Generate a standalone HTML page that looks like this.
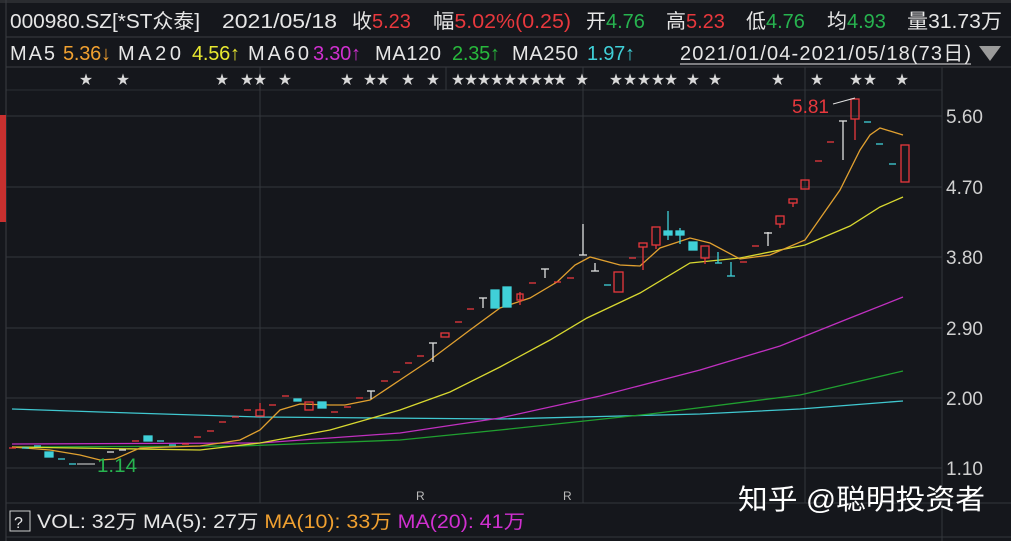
<!DOCTYPE html>
<html><head><meta charset="utf-8"><style>
body{margin:0;width:1011px;height:541px;background:#15171c;overflow:hidden;font-family:"Liberation Sans","Noto Sans CJK SC",sans-serif;}
svg{position:absolute;left:0;top:0}
</style></head><body>
<svg width="1011" height="541" xmlns="http://www.w3.org/2000/svg" font-family="Liberation Sans, Noto Sans CJK SC, sans-serif">
<rect width="1011" height="541" fill="#15171c"/>
<rect x="0" y="0" width="1011" height="3" fill="#2a2c30"/>
<line x1="6" y1="37" x2="1011" y2="37" stroke="#3a3d42"/>
<line x1="6" y1="67" x2="1011" y2="67" stroke="#3a3d42"/>
<line x1="6" y1="90" x2="942" y2="90" stroke="#2c2f34"/>
<line x1="6" y1="0" x2="6" y2="541" stroke="#3a3d42"/>
<rect x="0" y="115" width="6" height="107" fill="#c8302f"/>
<g stroke="#34373c" stroke-width="1">
<line x1="6" y1="116" x2="942" y2="116"/><line x1="6" y1="187" x2="942" y2="187"/>
<line x1="6" y1="257" x2="942" y2="257"/><line x1="6" y1="328" x2="942" y2="328"/>
<line x1="6" y1="398" x2="942" y2="398"/><line x1="6" y1="468" x2="942" y2="468"/>
<line x1="260" y1="67" x2="260" y2="503"/><line x1="446" y1="67" x2="446" y2="90"/>
<line x1="583" y1="67" x2="583" y2="503"/><line x1="805" y1="67" x2="805" y2="503"/>
<line x1="942" y1="67" x2="942" y2="541"/>
<line x1="6" y1="503" x2="1011" y2="503"/>
<line x1="6" y1="537" x2="1011" y2="537"/>
</g>
<g font-size="20" fill="#e6e6e6">
<text x="10" y="28" textLength="190" lengthAdjust="spacingAndGlyphs">000980.SZ[*ST众泰]</text>
<text x="222" y="28" textLength="115" lengthAdjust="spacingAndGlyphs">2021/05/18</text>
<text x="352" y="28">收<tspan fill="#e8383d">5.23</tspan></text>
<text x="433" y="28" textLength="138" lengthAdjust="spacingAndGlyphs">幅<tspan fill="#e8383d">5.02%(0.25)</tspan></text>
<text x="586" y="28">开<tspan fill="#27b34f">4.76</tspan></text>
<text x="666" y="28">高<tspan fill="#e8383d">5.23</tspan></text>
<text x="746" y="28">低<tspan fill="#27b34f">4.76</tspan></text>
<text x="827" y="28">均<tspan fill="#27b34f">4.93</tspan></text>
<text x="907" y="28" textLength="95" lengthAdjust="spacingAndGlyphs">量31.73万</text>
</g>
<g font-size="20" fill="#e6e6e6" lengthAdjust="spacingAndGlyphs">
<text x="10" y="60" textLength="45">MA5</text><text x="63" y="60" fill="#f0a030" textLength="48">5.36↓</text>
<text x="118" y="60" textLength="63">MA20</text><text x="192" y="60" fill="#e8e830" textLength="48">4.56↑</text>
<text x="248" y="60" textLength="61">MA60</text><text x="313" y="60" fill="#d030d0" textLength="48">3.30↑</text>
<text x="375" y="60" textLength="66">MA120</text><text x="452" y="60" fill="#28b83c" textLength="48">2.35↑</text>
<text x="512" y="60" textLength="66">MA250</text><text x="587" y="60" fill="#40d0d8" textLength="48">1.97↑</text>
<text x="680" y="60" textLength="291">2021/01/04-2021/05/18(73日)</text>
</g>
<line x1="680" y1="64" x2="971" y2="64" stroke="#e6e6e6"/>
<polygon points="979,46 1001,46 990,61" fill="#9a9a9a"/>
<g font-size="13" fill="#d8d8d8" text-anchor="middle">
<text x="86" y="84">★</text><text x="123" y="84">★</text><text x="222" y="84">★</text><text x="247" y="84">★</text><text x="260" y="84">★</text><text x="285" y="84">★</text>
<text x="347" y="84">★</text><text x="370" y="84">★</text><text x="383" y="84">★</text><text x="408" y="84">★</text><text x="433" y="84">★</text>
<text x="458" y="84">★</text><text x="471" y="84">★</text><text x="484" y="84">★</text><text x="497" y="84">★</text><text x="510" y="84">★</text><text x="523" y="84">★</text><text x="536" y="84">★</text><text x="549" y="84">★</text><text x="560" y="84">★</text>
<text x="582" y="84">★</text>
<text x="616" y="84">★</text><text x="630" y="84">★</text><text x="644" y="84">★</text><text x="658" y="84">★</text><text x="671" y="84">★</text>
<text x="693" y="84">★</text><text x="715" y="84">★</text><text x="778" y="84">★</text><text x="817" y="84">★</text><text x="856" y="84">★</text><text x="870" y="84">★</text><text x="902" y="84">★</text>
</g>
<g font-size="19" fill="#d0d0d0">
<text x="946" y="123">5.60</text><text x="946" y="194">4.70</text><text x="946" y="264">3.80</text>
<text x="946" y="335">2.90</text><text x="946" y="405">2.00</text><text x="946" y="475">1.10</text>
</g>
<g fill="none" stroke-width="1.3">
<polyline stroke="#40c8d0" points="12,409 100,412 260,417 500,419 700,414 800,409 903,401"/>
<polyline stroke="#20a030" points="12,447 240,446 400,440 500,430 650,414 800,395 903,371"/>
<polyline stroke="#c030c0" points="12,444 260,443 400,433 500,418 600,396 700,370 780,346 850,318 903,297"/>
<polyline stroke="#d8d830" points="12,447 200,450 260,443 330,430 400,410 450,392 500,367 550,340 587,318 640,293 690,263 740,258 805,245 850,226 880,207 903,197"/>
<polyline stroke="#e0a030" points="12,447 50,450 80,455 100,460 115,459 140,448 200,446 240,440 260,430 280,410 300,404 330,405 345,405 370,400 400,380 430,360 470,330 500,308 530,298 557,282 575,265 590,257 620,265 640,266 660,248 690,238 710,243 740,259 770,255 805,240 840,190 860,150 870,135 880,128 903,135"/>
</g>
<g stroke-width="1.3" fill="none">
<g stroke="#e8383d">
<line x1="9" y1="448" x2="16" y2="448"/>
<line x1="132" y1="441" x2="139" y2="441"/>
<line x1="182" y1="444" x2="189" y2="444"/><line x1="194" y1="437" x2="201" y2="437"/>
<line x1="207" y1="431" x2="214" y2="431"/><line x1="219" y1="422" x2="226" y2="422"/>
<line x1="232" y1="417" x2="239" y2="417"/><line x1="244" y1="410" x2="251" y2="410"/>
<rect x="256" y="410" width="8" height="6"/><line x1="260" y1="403" x2="260" y2="410"/>
<line x1="269" y1="405" x2="276" y2="405"/><line x1="282" y1="396" x2="289" y2="396"/>
<rect x="305" y="402" width="8" height="8"/>
<line x1="331" y1="412" x2="338" y2="412"/><line x1="344" y1="407" x2="351" y2="407"/><line x1="356" y1="398" x2="363" y2="398"/>
<line x1="381" y1="381" x2="388" y2="381"/><line x1="393" y1="372" x2="400" y2="372"/><line x1="405" y1="363" x2="412" y2="363"/><line x1="417" y1="356" x2="424" y2="356"/>
<rect x="441" y="333" width="8" height="4"/><line x1="455" y1="322" x2="462" y2="322"/><line x1="467" y1="309" x2="474" y2="309"/>
<rect x="517" y="294" width="6" height="6"/><line x1="520" y1="292" x2="520" y2="305"/>
<line x1="529" y1="283" x2="536" y2="283"/><line x1="554" y1="282" x2="561" y2="282"/><line x1="567" y1="278" x2="574" y2="278"/>
<rect x="614" y="272" width="9" height="20"/>
<line x1="629" y1="258" x2="636" y2="258"/>
<rect x="639" y="243" width="8" height="4"/><line x1="643" y1="247" x2="643" y2="270"/>
<rect x="652" y="227" width="8" height="18"/><line x1="656" y1="245" x2="656" y2="249"/>
<rect x="701" y="246" width="8" height="12"/><line x1="705" y1="258" x2="705" y2="264"/>
<line x1="740" y1="262" x2="747" y2="262"/><line x1="752" y1="246" x2="759" y2="246"/>
<rect x="776" y="216" width="8" height="8"/><line x1="780" y1="224" x2="780" y2="228"/>
<rect x="789" y="199" width="8" height="4"/><line x1="793" y1="203" x2="793" y2="207"/>
<rect x="801" y="180" width="8" height="9"/>
<line x1="815" y1="161" x2="822" y2="161"/><line x1="827" y1="142" x2="834" y2="142"/>
<rect x="851" y="99" width="8" height="20"/><line x1="855" y1="119" x2="855" y2="140"/>
<rect x="901" y="145" width="8" height="37"/>
</g>
<g stroke="#40d0d8" fill="#40d0d8">
<line x1="22" y1="448" x2="29" y2="448"/><line x1="34" y1="446" x2="41" y2="446"/>
<rect x="45" y="452" width="8" height="5"/><line x1="58" y1="459" x2="65" y2="459"/><line x1="69" y1="464" x2="76" y2="464"/>
<rect x="144" y="436" width="8" height="5"/><line x1="157" y1="441" x2="164" y2="441"/><line x1="169" y1="445" x2="176" y2="445"/>
<rect x="294" y="399" width="7" height="2"/><rect x="318" y="402" width="8" height="6"/>
<rect x="491" y="290" width="8" height="18"/><rect x="503" y="287" width="8" height="20"/>
<line x1="604" y1="285" x2="611" y2="285"/>
<line x1="668" y1="211" x2="668" y2="240"/><rect x="664" y="231" width="8" height="4"/>
<rect x="676" y="231" width="8" height="4"/><line x1="680" y1="228" x2="680" y2="244"/>
<rect x="689" y="242" width="8" height="8"/>
<line x1="718" y1="252" x2="718" y2="263"/><line x1="715" y1="263" x2="722" y2="263"/>
<line x1="731" y1="262" x2="731" y2="276"/><line x1="727" y1="276" x2="735" y2="276"/>
<line x1="864" y1="122" x2="871" y2="122"/><line x1="876" y1="144" x2="883" y2="144"/><line x1="889" y1="164" x2="896" y2="164"/>
</g>
<g stroke="#e0e0e0">
<line x1="107" y1="452" x2="114" y2="452"/><line x1="119" y1="450" x2="126" y2="450"/>
<line x1="371" y1="391" x2="371" y2="399"/><line x1="367" y1="391" x2="375" y2="391"/>
<line x1="433" y1="343" x2="433" y2="362"/><line x1="429" y1="343" x2="437" y2="343"/>
<line x1="483" y1="298" x2="483" y2="308"/><line x1="479" y1="298" x2="487" y2="298"/>
<line x1="545" y1="269" x2="545" y2="278"/><line x1="541" y1="269" x2="549" y2="269"/>
<line x1="583" y1="224" x2="583" y2="255"/><line x1="579" y1="255" x2="587" y2="255"/>
<line x1="595" y1="263" x2="595" y2="271"/><line x1="591" y1="271" x2="599" y2="271"/>
<line x1="768" y1="232" x2="768" y2="246"/><line x1="764" y1="233" x2="772" y2="233"/>
<line x1="843" y1="121" x2="843" y2="160"/><line x1="839" y1="121" x2="847" y2="121"/>
</g>
</g>
<text x="792" y="113" font-size="19" fill="#e8383d">5.81</text>
<line x1="833" y1="104" x2="855" y2="98" stroke="#e0e0e0"/>
<text x="97" y="472" font-size="19" fill="#27b34f" textLength="40" lengthAdjust="spacingAndGlyphs">1.14</text>
<line x1="77" y1="464" x2="95" y2="464" stroke="#e0e0e0"/>
<text x="416" y="500" font-size="12" fill="#bbb">R</text>
<text x="563" y="500" font-size="12" fill="#bbb">R</text>
<text x="738" y="509" font-size="28" fill="#ffffff" textLength="247" lengthAdjust="spacingAndGlyphs">知乎 @聪明投资者</text>
<rect x="10" y="511" width="20" height="20" fill="none" stroke="#ccc"/>
<text x="14" y="528" font-size="16" fill="#e6e6e6">?</text>
<text x="37" y="528" font-size="19" fill="#e6e6e6" textLength="488" lengthAdjust="spacingAndGlyphs">VOL: 32万 MA(5): 27万 <tspan fill="#f0a030">MA(10): 33万</tspan> <tspan fill="#d030d0">MA(20): 41万</tspan></text>
</svg>
</body></html>
